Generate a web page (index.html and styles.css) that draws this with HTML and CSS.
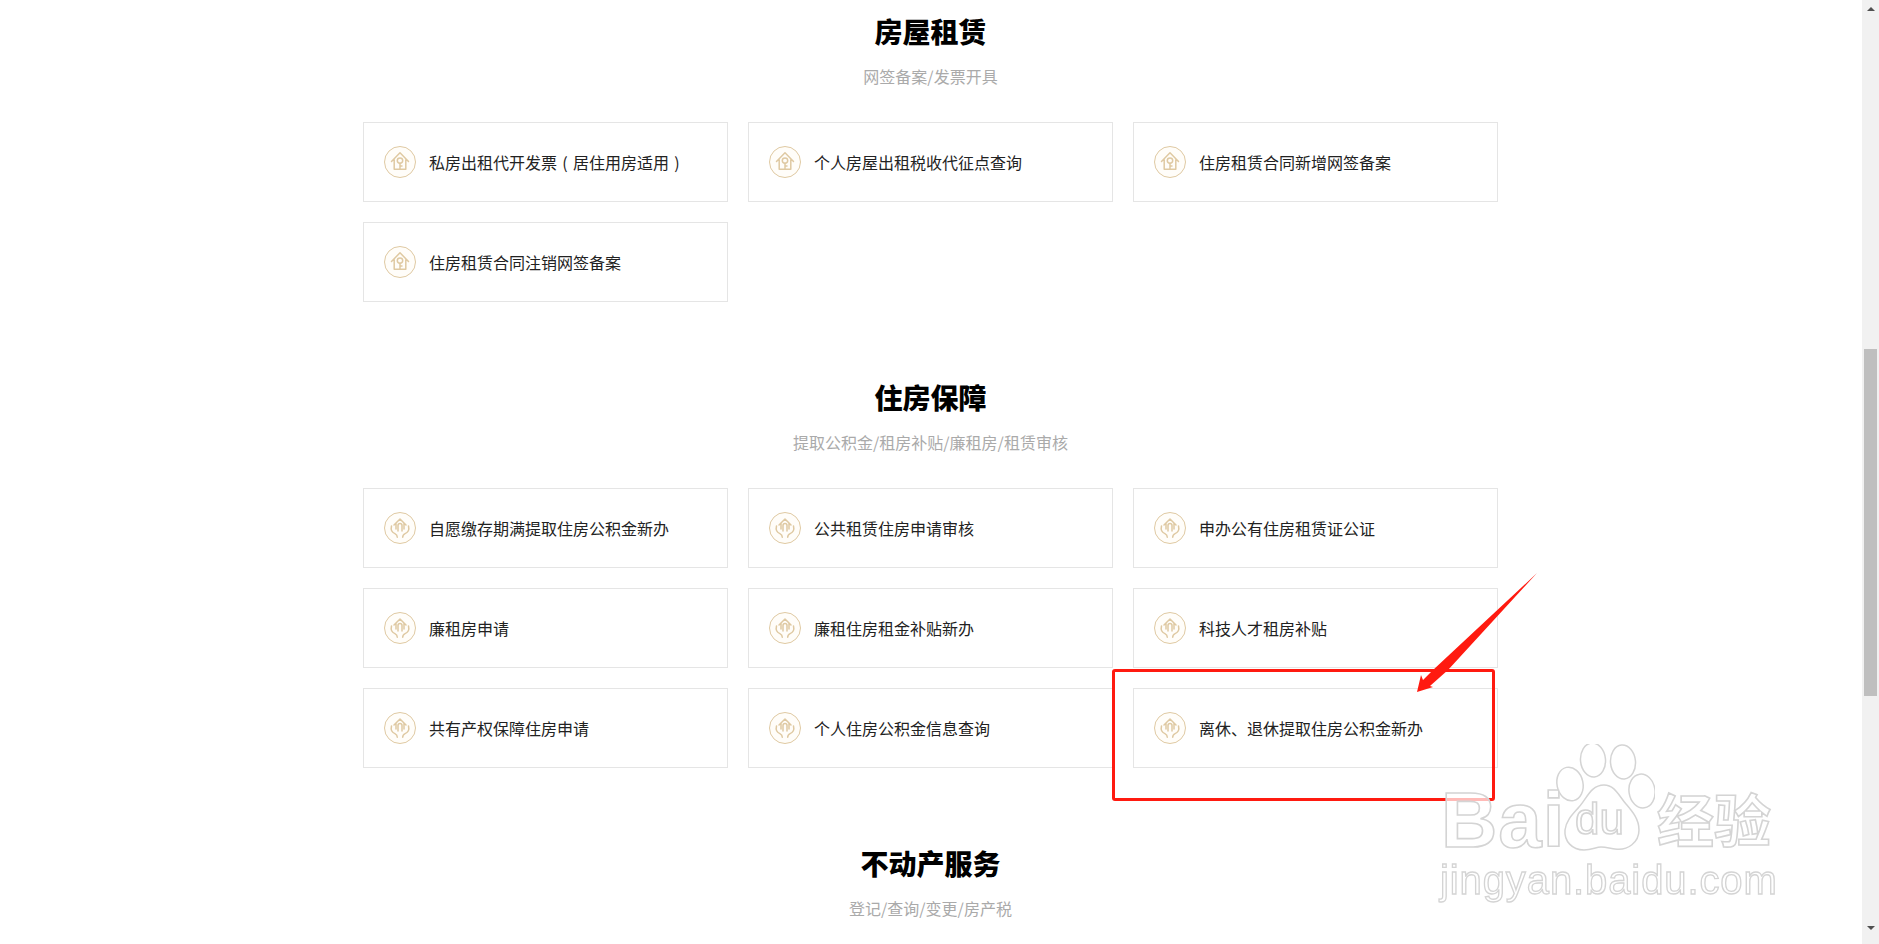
FILE: index.html
```html
<!DOCTYPE html>
<html lang="zh-CN">
<head>
<meta charset="utf-8">
<title>房屋租赁</title>
<link rel="stylesheet" href="styles.css">
</head>
<body>
<svg class="defs" width="0" height="0" aria-hidden="true">
  <symbol id="i-key" viewBox="0 0 32 32">
    <circle cx="16" cy="16" r="15.5" class="ring"/>
    <path d="M7.5 15.5 16 6.8l8.5 8.7M10.2 13.5v9.7h11.6v-9.7" class="line"/>
    <circle cx="16" cy="14.6" r="2.7" class="line"/>
    <path d="M16 17.3v5.4M16 20h2" class="line"/>
  </symbol>
  <symbol id="i-hand" viewBox="0 0 32 32">
    <circle cx="16" cy="16" r="15.5" class="ring"/>
    <path d="M10 13 16 7l6 6M12 11.5V17M20 11.5V17M14 19v-5.5a2 2 0 0 1 4 0V19" class="line"/>
    <path d="M7.5 14c-1 4 .6 6.4 3.4 7.6 1.6.7 2.4 1.8 2.4 3.6" class="line"/>
    <path d="M24.5 14c1 4-.6 6.4-3.4 7.6-1.6.7-2.4 1.8-2.4 3.6" class="line"/>
  </symbol>
</svg>

<div class="page">
  <main class="content">
    <section class="group">
      <h2 class="title">房屋租赁</h2>
      <p class="sub">网签备案/发票开具</p>
      <div class="cards">
        <a class="card"><svg class="icon"><use href="#i-key"/></svg><span>私房出租代开发票<span class="paren">(</span>居住用房适用<span class="paren">)</span></span></a>
        <a class="card"><svg class="icon"><use href="#i-key"/></svg><span>个人房屋出租税收代征点查询</span></a>
        <a class="card"><svg class="icon"><use href="#i-key"/></svg><span>住房租赁合同新增网签备案</span></a>
        <a class="card"><svg class="icon"><use href="#i-key"/></svg><span>住房租赁合同注销网签备案</span></a>
      </div>
    </section>
    <section class="group">
      <h2 class="title">住房保障</h2>
      <p class="sub">提取公积金/租房补贴/廉租房/租赁审核</p>
      <div class="cards">
        <a class="card"><svg class="icon"><use href="#i-hand"/></svg><span>自愿缴存期满提取住房公积金新办</span></a>
        <a class="card"><svg class="icon"><use href="#i-hand"/></svg><span>公共租赁住房申请审核</span></a>
        <a class="card"><svg class="icon"><use href="#i-hand"/></svg><span>申办公有住房租赁证公证</span></a>
        <a class="card"><svg class="icon"><use href="#i-hand"/></svg><span>廉租房申请</span></a>
        <a class="card"><svg class="icon"><use href="#i-hand"/></svg><span>廉租住房租金补贴新办</span></a>
        <a class="card"><svg class="icon"><use href="#i-hand"/></svg><span>科技人才租房补贴</span></a>
        <a class="card"><svg class="icon"><use href="#i-hand"/></svg><span>共有产权保障住房申请</span></a>
        <a class="card"><svg class="icon"><use href="#i-hand"/></svg><span>个人住房公积金信息查询</span></a>
        <a class="card"><svg class="icon"><use href="#i-hand"/></svg><span>离休、退休提取住房公积金新办</span></a>
      </div>
    </section>
    <section class="group">
      <h2 class="title">不动产服务</h2>
      <p class="sub">登记/查询/变更/房产税</p>
    </section>
  </main>
  <aside class="scrollbar">
    <div class="arrow-up"></div>
    <div class="thumb"></div>
    <div class="arrow-down"></div>
  </aside>
</div>

<div class="redbox"></div>
<svg class="redarrow" width="130" height="130" viewBox="1412 568 130 130">
  <polygon points="1537,573 1448,670 1430,686 1433,687 1417,692 1421,675 1423,680 1433,670" fill="#ff1a10"/>
</svg>

<div class="watermark">
  <span class="wm wm-bai">Bai</span>
  <svg class="wm-paw" width="100" height="110" viewBox="0 0 100 110">
    <g class="paw">
      <ellipse cx="15" cy="40" rx="13" ry="17" transform="rotate(-12 15 40)"/>
      <ellipse cx="38" cy="16" rx="12.5" ry="17" transform="rotate(-5 38 16)"/>
      <ellipse cx="68" cy="18" rx="12.5" ry="17" transform="rotate(-5 68 18)"/>
      <ellipse cx="87" cy="47" rx="13" ry="17" transform="rotate(-8 87 47)"/>
      <path d="M49 41c11 0 15 11 22 19 6 7 13 15 13 26 0 12-11 21-24 19-6-1-10-2-14-2-5 0-9 3-17 3C17 106 9 97 10 86c1-10 9-17 14-23 8-9 12-22 25-22Z"/>
    </g>
  </svg>
  <span class="wm wm-du">du</span>
  <span class="wm wm-cn">经验</span>
  <span class="wm wm-url">jingyan.baidu.com</span>
</div>
</body>
</html>
```

FILE: styles.css
```css
* { box-sizing: border-box; }
html, body { margin: 0; padding: 0; height: 100%; overflow: hidden; background: #fff; }
body { font-family: "Noto Sans CJK SC", "Liberation Sans", sans-serif; color: #333; position: relative; }
.defs { position: absolute; }
.ring { fill: #fffdf9; stroke: #dfc9a2; stroke-width: 1; }
.line { fill: none; stroke: #dfc9a2; stroke-width: 1.5; stroke-linecap: round; stroke-linejoin: round; }

.page { display: flex; height: 944px; overflow: hidden; }
.content { flex: 1; min-width: 0; padding: 11px 0 0 363px; }

.group { width: 1135px; margin-bottom: 75px; }
.title { margin: 0; font-size: 28px; line-height: 40px; font-weight: 900; color: #000; text-align: center; }
.sub { margin: 13px 0 34px; font-size: 16px; line-height: 24px; color: #aaa; text-align: center; }

.cards { display: grid; grid-template-columns: repeat(3, 365px); gap: 20px; }
.card { display: flex; align-items: center; gap: 13px; height: 80px; padding-left: 20px; border: 1px solid #e5e5e5; background: #fff; font-size: 16px; line-height: 24px; color: #222; }
.icon { width: 32px; height: 32px; flex: none; }
.paren { display: inline-block; width: 16px; text-align: center; }

.scrollbar { width: 17px; flex: none; height: 944px; background: #f1f1f1; display: flex; flex-direction: column; align-items: center; }
.arrow-up { width: 0; height: 0; margin-top: 7px; border: 4px solid transparent; border-top: 0; border-bottom: 4px solid #505050; }
.thumb { width: 13px; height: 347px; margin-top: 338px; background: #bfbfbf; }
.arrow-down { width: 0; height: 0; margin-top: 230px; border: 4px solid transparent; border-bottom: 0; border-top: 4px solid #505050; }

.redbox { position: absolute; left: 1112px; top: 669px; width: 383px; height: 132px; border: 3px solid #ff1a10; border-radius: 3px; }
.redarrow { position: absolute; left: 1412px; top: 568px; }

.watermark { position: absolute; left: 1430px; top: 740px; width: 360px; height: 180px; filter: blur(0.6px); }
.wm { position: absolute; color: rgba(255,255,255,.7); -webkit-text-stroke: 1.6px #d4d4d4; font-family: "Liberation Sans", sans-serif; line-height: 1; white-space: nowrap; }
.wm-bai { left: 11px; top: 42px; font-size: 78px; line-height: 76px; font-weight: 700; letter-spacing: 1px; }
.wm-du { left: 145px; top: 57px; font-size: 44px; }
.wm-cn { left: 227px; top: 49px; font-size: 57px; font-weight: 700; font-family: "Noto Sans CJK SC", sans-serif; }
.wm-url { left: 10px; top: 120px; font-size: 40px; letter-spacing: 0.9px; -webkit-text-stroke-width: 1.3px; }
.wm-paw { position: absolute; left: 125px; top: 4px; }
.paw ellipse, .paw path { fill: rgba(255,255,255,.7); stroke: #d4d4d4; stroke-width: 1.5; }
```
